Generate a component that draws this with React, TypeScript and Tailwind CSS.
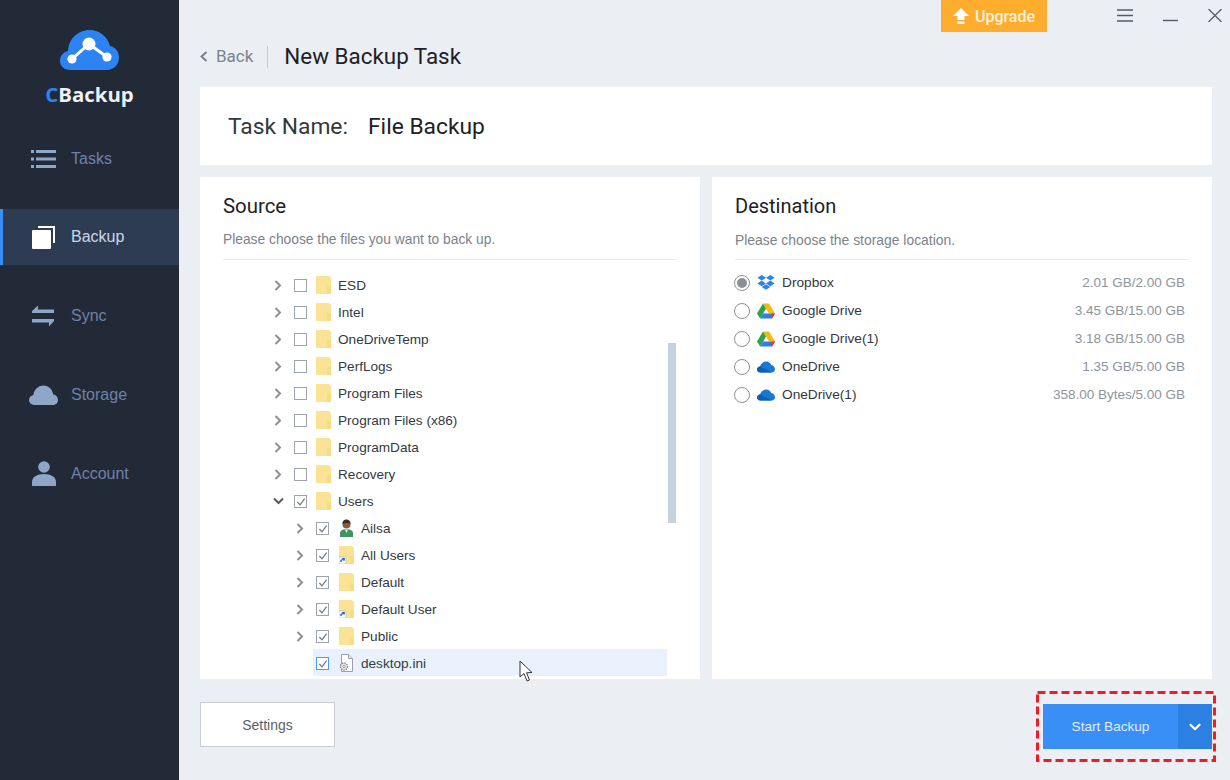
import { ReactNode } from 'react';
import { ChevronDown } from 'lucide-react';

const sans = 'font-["Liberation_Sans",Arial,sans-serif]';

function TasksIcon() {
  return (
    <svg width="25" height="20" viewBox="0 0 25 20" fill="#8ea6c8">
      <rect x="0" y="1" width="3" height="3" />
      <rect x="5" y="1" width="20" height="3" />
      <rect x="0" y="8.5" width="3" height="3" />
      <rect x="5" y="8.5" width="20" height="3" />
      <rect x="0" y="16" width="3" height="3" />
      <rect x="5" y="16" width="20" height="3" />
    </svg>
  );
}

function BackupIcon() {
  return (
    <svg width="24" height="24" viewBox="0 0 24 24">
      <path d="M6 1h17v17h-2V3H6z" fill="#fff" />
      <rect x="0" y="5" width="19" height="19" rx="1" fill="#fff" />
    </svg>
  );
}

function SyncIcon() {
  return (
    <svg width="23" height="22" viewBox="0 0 23 22" fill="#8ea6c8">
      <path d="M6 0.5 L6 4.5 L22 4.5 L22 8 L0 8 L0 6 Z" />
      <path d="M17 21.5 L17 17.5 L0 17.5 L0 14 L22 14 L22 16 Z" />
    </svg>
  );
}

function CloudIcon() {
  return (
    <svg width="29" height="20" viewBox="0 0 29 20" fill="#8ea6c8">
      <path d="M6 20 C2.5 20 0 17.8 0 15 C0 12.4 1.8 10.6 4.4 10 C4.8 5 9 0.5 14.5 0.5 C19.5 0.5 23.4 4.2 24.2 9.2 C27 9.8 29 12.2 29 15 C29 18 26.6 20 23.5 20 Z" />
    </svg>
  );
}

function UserIcon() {
  return (
    <svg width="24" height="25" viewBox="0 0 24 25" fill="#8ea6c8">
      <circle cx="12" cy="6" r="5.8" />
      <path d="M0 25 V21 C0 16 5 13 12 13 C19 13 24 16 24 21 V25 Z" />
    </svg>
  );
}

function Logo() {
  return (
    <svg width="60" height="42" viewBox="0 0 60 42">
      <path
        d="M10 41 C4 41 0 37 0 31.5 C0 26.5 3.5 23 8 22 C8.5 10 18 1 29.5 1 C39.5 1 47.5 7.5 50 17 C55.5 18 59 22.5 59 28.5 C59 36 53.5 41 47 41 Z"
        fill="#2d83f2"
      />
      <path d="M12 30 L29 15 L47 28" stroke="#fff" strokeWidth="3" fill="none" />
      <circle cx="29" cy="15" r="6.5" fill="#fff" />
      <circle cx="12" cy="30" r="4.6" fill="#fff" />
      <circle cx="47" cy="28" r="4.6" fill="#fff" />
    </svg>
  );
}

function Folder({ shortcut = false }: { shortcut?: boolean }) {
  return (
    <svg width="15" height="18" viewBox="0 0 15 18">
      <path d="M0 0 H13 L15 2 V18 H0 Z" fill="#fbe396" />
      <path d="M11 10 H15 V18 H11 Z" fill="#f8dc84" />
      {shortcut && (
        <g>
          <rect x="0" y="11" width="7" height="7" fill="#fff" stroke="#aab6c4" strokeWidth="0.6" />
          <path d="M2 16 V14.4 L4.6 13 M3.2 12.4 L5.3 12.7 L4.9 14.6" stroke="#1b62c4" strokeWidth="1.3" fill="none" />
        </g>
      )}
    </svg>
  );
}

function AvatarIcon() {
  return (
    <svg width="15" height="18" viewBox="0 0 15 18">
      <path d="M1 18 V14 C1 11.5 3.5 10.2 7.5 10.2 C11.5 10.2 14 11.5 14 14 V18 Z" fill="#3f9461" />
      <path d="M6 10.5 H9 L7.5 14 Z" fill="#e9f2ec" />
      <circle cx="7.5" cy="5.5" r="4" fill="#8a5a44" />
      <path d="M3.5 5 C3.5 1.5 5.5 0.5 7.5 0.5 C10 0.5 11.5 2 11.5 5 C10 3.5 5.5 3.5 3.5 5 Z" fill="#43291f" />
    </svg>
  );
}

function IniIcon() {
  return (
    <svg width="16" height="18" viewBox="0 0 16 18">
      <path d="M3.5 0.5 H10.5 L14.5 4.5 V17.5 H3.5 Z" fill="#fff" stroke="#9aa0a6" strokeWidth="1" />
      <path d="M10.5 0.5 V4.5 H14.5" fill="#e4e7ea" stroke="#9aa0a6" strokeWidth="1" />
      <circle cx="6" cy="12.5" r="3.6" fill="#e9eaeb" stroke="#80868c" strokeWidth="1.4" strokeDasharray="1.4 1" />
      <circle cx="6" cy="12.5" r="1.2" fill="#fff" stroke="#80868c" strokeWidth="0.8" />
    </svg>
  );
}

function Check() {
  return (
    <svg className="absolute inset-0" width="13" height="13" viewBox="0 0 13 13">
      <path d="M2.4 6 L5 8.8 L9.6 2.6" stroke="#6d7680" strokeWidth="1.2" fill="none" />
    </svg>
  );
}

type Row = {
  name: string;
  icon?: ReactNode;
  checked?: boolean;
  open?: boolean;
  child?: boolean;
  leaf?: boolean;
};

const rows: Row[] = [
  { name: 'ESD' },
  { name: 'Intel' },
  { name: 'OneDriveTemp' },
  { name: 'PerfLogs' },
  { name: 'Program Files' },
  { name: 'Program Files (x86)' },
  { name: 'ProgramData' },
  { name: 'Recovery' },
  { name: 'Users', checked: true, open: true },
  { name: 'Ailsa', checked: true, child: true, icon: <AvatarIcon /> },
  { name: 'All Users', checked: true, child: true, icon: <Folder shortcut /> },
  { name: 'Default', checked: true, child: true },
  { name: 'Default User', checked: true, child: true, icon: <Folder shortcut /> },
  { name: 'Public', checked: true, child: true },
  { name: 'desktop.ini', checked: true, child: true, leaf: true, icon: <IniIcon /> },
];

function TreeRow({ row }: { row: Row }) {
  const indent = row.leaf ? 'ml-[113px] w-[354px] bg-[#e9f2fc]' : row.child ? 'ml-[108px]' : 'ml-[86px]';
  return (
    <div className={`flex h-[27px] items-center pt-px ${indent}`}>
      {!row.leaf && (
        <span className="-ml-[16px] flex w-[16px] justify-center">
          {row.open ? (
            <svg width="11" height="8" viewBox="0 0 11 8" fill="none" stroke="#555b61" strokeWidth="2">
              <path d="M1 1.5 L5.5 6 L10 1.5" />
            </svg>
          ) : (
            <svg width="8" height="11" viewBox="0 0 8 11" fill="none" stroke="#8c9094" strokeWidth="2">
              <path d="M1.5 1 L6 5.5 L1.5 10" />
            </svg>
          )}
        </span>
      )}
      <span className={`relative h-[13px] w-[13px] border bg-white ${row.leaf ? 'ml-[3px] border-[#4b9cf5]' : 'ml-[8px] border-[#9ba3ac]'}`}>
        {row.checked && <Check />}
      </span>
      <span className={`flex w-[16px] justify-center ${row.child ? 'ml-[9px]' : 'ml-[8px]'}`}>{row.icon ?? <Folder />}</span>
      <span className={`ml-[7px] pt-[2px] ${sans} text-[13.6px] text-[#333a42]`}>{row.name}</span>
    </div>
  );
}

function Dropbox() {
  return (
    <svg width="18" height="16" viewBox="0 0 18 16" fill="#2c83f0">
      <path d="M4.7 0 L9 2.8 L4.7 5.6 L0.4 2.8 Z" />
      <path d="M13.3 0 L17.6 2.8 L13.3 5.6 L9 2.8 Z" />
      <path d="M4.7 5.6 L9 8.4 L4.7 11.2 L0.4 8.4 Z" />
      <path d="M13.3 5.6 L17.6 8.4 L13.3 11.2 L9 8.4 Z" />
      <path d="M4.7 12 L9 9.3 L13.3 12 L9 14.8 Z" />
    </svg>
  );
}

function GoogleDrive() {
  return (
    <svg width="18" height="16" viewBox="0 0 18 16">
      <path d="M6 0.5 H12 L18 10.5 H12 Z" fill="#f6b90f" />
      <path d="M6 0.5 L9 5.5 L3.2 15.5 L0 10.5 Z" fill="#2ba24c" />
      <path d="M6 10.5 H18 L15 15.5 H3.2 Z" fill="#2f7bec" />
      <path d="M15 15.5 L18 10.5 H14.5 Z" fill="#e5392d" />
    </svg>
  );
}

function OneDrive() {
  return (
    <svg width="18" height="12" viewBox="0 0 18 12">
      <path d="M3.4 11.5 C1.3 11.5 0 10.2 0 8.6 C0 6.9 1.3 5.7 3 5.6 C3.8 2.6 6.4 0.5 9.2 0.5 C11.6 0.5 13.4 1.8 14.2 4 C16.4 4.4 18 6.2 18 8.3 C18 10.2 16.6 11.5 14.8 11.5 Z" fill="#1a78d2" />
      <path d="M3.4 11.5 C1.3 11.5 0 10.2 0 8.6 C0 6.9 1.3 5.7 3 5.6 L14.8 11.5 Z" fill="#0d5fb3" />
    </svg>
  );
}

const destinations = [
  { name: 'Dropbox', size: '2.01 GB/2.00 GB', icon: <Dropbox />, on: true },
  { name: 'Google Drive', size: '3.45 GB/15.00 GB', icon: <GoogleDrive /> },
  { name: 'Google Drive(1)', size: '3.18 GB/15.00 GB', icon: <GoogleDrive /> },
  { name: 'OneDrive', size: '1.35 GB/5.00 GB', icon: <OneDrive /> },
  { name: 'OneDrive(1)', size: '358.00 Bytes/5.00 GB', icon: <OneDrive /> },
];

const navItems = [
  { label: 'Tasks', icon: <TasksIcon /> },
  { label: 'Backup', icon: <BackupIcon />, active: true },
  { label: 'Sync', icon: <SyncIcon /> },
  { label: 'Storage', icon: <CloudIcon /> },
  { label: 'Account', icon: <UserIcon /> },
];

export default function App() {
  return (
    <div className={`relative flex h-[780px] w-[1230px] overflow-hidden bg-[#ebeff4] ${sans}`}>
      {/* Sidebar */}
      <aside className="flex h-full w-[179px] shrink-0 flex-col bg-[#222a37]">
        <div className="flex flex-col items-center pt-[29px]">
          <Logo />
          <div className="mt-[10px] h-[26px] font-['Open_Sans',sans-serif] text-[20.4px] leading-[26px] font-bold text-[#eef1f5]">
            <span className="text-[#2d83f2]">C</span>Backup
          </div>
        </div>
        <nav className="mt-[12px] flex flex-col">
          {navItems.map((item) => (
            <div
              key={item.label}
              className={`flex items-center ${item.active ? 'my-[11px] h-[56px] border-l-[3px] border-[#3a8ff7] bg-[#2d3c52] pl-[26px]' : 'h-[79px] pl-[29px]'}`}
            >
              <span className="flex w-[29px] justify-center">{item.icon}</span>
              <span className={`ml-[13px] text-[16px] ${item.active ? 'text-[#cfd7e2]' : 'text-[#6f81a8]'}`}>{item.label}</span>
            </div>
          ))}
        </nav>
      </aside>

      {/* Main */}
      <main className="relative flex min-w-0 flex-1 flex-col pr-[18px] pl-[21px]">
        <div className="absolute top-0 right-[183px] flex h-[32px] w-[106px] items-center justify-center gap-[6px] bg-[#ffad2e] pt-px font-['Roboto',sans-serif] text-[16px] font-medium text-[#fff1d8]">
          <svg width="16" height="17" viewBox="0 0 16 17" fill="#fff">
            <path d="M8 0 L16 8 H11.5 V12 H4.5 V8 H0 Z" />
            <rect x="4.5" y="13.5" width="7" height="2.5" />
          </svg>
          Upgrade
        </div>
        <div className="absolute top-[9px] right-[8px] flex items-start gap-[30px]">
          <svg width="16" height="13" viewBox="0 0 16 13" stroke="#555b62" strokeWidth="1.4">
            <path d="M0 1 H16 M0 6.5 H16 M0 12 H16" />
          </svg>
          <svg width="15" height="13" viewBox="0 0 15 13" stroke="#555b62" strokeWidth="1.4">
            <path d="M0 11.5 H15" />
          </svg>
          <svg width="14" height="13" viewBox="0 0 14 13" stroke="#555b62" strokeWidth="1.3">
            <path d="M0.5 0 L13.5 13 M13.5 0 L0.5 13" />
          </svg>
        </div>

        <header className="flex h-[87px] items-center pt-[26px]">
          <svg width="8" height="11" viewBox="0 0 8 11" fill="none" stroke="#777c82" strokeWidth="1.8">
            <path d="M6.5 1 L1.5 5.5 L6.5 10" />
          </svg>
          <span className="ml-[8px] font-['Roboto',sans-serif] text-[17px] text-[#7c828a]">Back</span>
          <span className="ml-[14px] h-[22px] w-px bg-[#c4c9cf]" />
          <h1 className="ml-[16px] font-['Roboto',sans-serif] text-[22.4px] font-normal text-[#1d2126]">New Backup Task</h1>
        </header>

        <section className="flex h-[78px] items-center bg-white pt-[2px] pl-[28px] font-['Roboto',sans-serif] text-[22.8px]">
          <span className="text-[#33383e]">Task Name:</span>
          <span className="ml-[20px] text-[#1d2126]">File Backup</span>
        </section>

        <div className="mt-[12px] flex h-[502px] gap-[12px]">
          {/* Source */}
          <section className="relative flex w-[500px] flex-col overflow-hidden bg-white">
            <div className="mx-[23px] h-[83px] border-b border-[#e8ebef] pt-[16px]">
              <h2 className="font-['Roboto',sans-serif] text-[20.4px] leading-[26px] font-normal text-[#1d2126]">Source</h2>
              <p className="mt-[13px] text-[13.8px] leading-[16px] text-[#7c828a]">Please choose the files you want to back up.</p>
            </div>
            <div className="pt-[11px]">
              {rows.map((row) => (
                <TreeRow key={row.name} row={row} />
              ))}
            </div>
            <div className="absolute top-[166px] left-[468px] h-[180px] w-[8px] bg-[#c5d2e0]" />
          </section>

          {/* Destination */}
          <section className="flex w-[500px] flex-col bg-white">
            <div className="mx-[23px] h-[83px] border-b border-[#e8ebef] pt-[16px]">
              <h2 className="font-['Roboto',sans-serif] text-[20px] leading-[26px] font-normal text-[#1d2126]">Destination</h2>
              <p className="mt-[13px] text-[13.9px] leading-[16px] text-[#7c828a]">Please choose the storage location.</p>
            </div>
            <div className="mx-[22px] pt-[9px]">
              {destinations.map((d) => (
                <div key={d.name} className="flex h-[28px] items-center">
                  <span className="flex h-[16px] w-[16px] items-center justify-center rounded-full border border-[#8b9096] bg-white">
                    {d.on && <span className="h-[10px] w-[10px] rounded-full bg-[#8b9096]" />}
                  </span>
                  <span className="ml-[7px] flex w-[18px] justify-center">{d.icon}</span>
                  <span className="ml-[7px] pt-px text-[13.7px] text-[#33383e]">{d.name}</span>
                  <span className="mr-[5px] ml-auto pt-px text-[13.5px] text-[#8e949b]">{d.size}</span>
                </div>
              ))}
            </div>
          </section>
        </div>

        <footer className="relative mt-[23px] flex items-start justify-between">
          <button className="h-[45px] w-[135px] border border-[#c9ced4] bg-white pt-[2px] text-[14px] text-[#5c6168]">Settings</button>
          <div className="mt-[2px] flex h-[45px] w-[169px] text-[13.6px] text-[#e3edfb]">
            <button className="flex-1 bg-[#3a8ff7] pt-[2px]">Start Backup</button>
            <button className="flex w-[34px] items-center justify-center bg-[#2c7fe3]">
              <ChevronDown size={18} strokeWidth={3} className="text-white" />
            </button>
          </div>
          {/* Red highlight round the button */}
          <svg className="absolute -top-[11px] -right-[4px]" width="180" height="71" viewBox="0 0 180 71" fill="none">
            <rect x="1.5" y="1.5" width="177" height="68" stroke="#ee1c25" strokeWidth="3" strokeDasharray="8 4" />
          </svg>
        </footer>
      </main>

      {/* Mouse pointer */}
      <svg className="absolute top-[660px] left-[519px]" width="15" height="23" viewBox="0 0 15 23">
        <path d="M1 1 V17 L5 13.5 L8 21 L10.5 20 L7.5 12.8 L13 12.5 Z" fill="#fff" stroke="#333" strokeWidth="1" />
      </svg>
    </div>
  );
}
